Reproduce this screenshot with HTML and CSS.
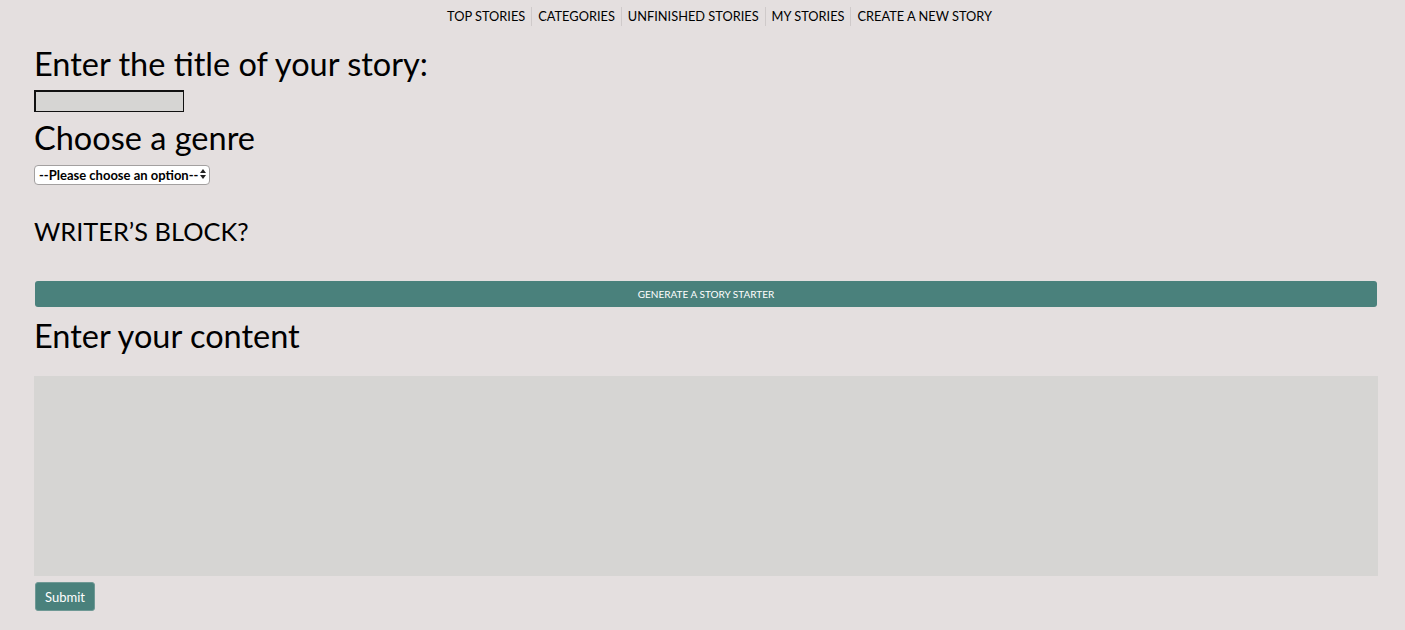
FILE: index.html
```html
<!DOCTYPE html>
<html lang="en">
<head>
<meta charset="utf-8">
<title>Create a new story</title>
<link rel="stylesheet" href="styles.css">
</head>
<body>
<nav class="nav">
  <a class="nav-link" href="#">TOP STORIES</a>
  <a class="nav-link" href="#">CATEGORIES</a>
  <a class="nav-link" href="#">UNFINISHED STORIES</a>
  <a class="nav-link" href="#">MY STORIES</a>
  <a class="nav-link" href="#">CREATE A NEW STORY</a>
</nav>
<main class="page">
  <form class="story-form">
    <h1 class="heading title-heading">Enter the title of your story:</h1>
    <input class="title-input" type="text">
    <h1 class="heading">Choose a genre</h1>
    <div class="select-wrap">
      <select class="genre-select">
        <option>--Please choose an option--</option>
      </select>
      <span class="select-arrows"><span class="arr-up"></span><span class="arr-down"></span></span>
    </div>
    <h2 class="subheading">WRITER’S BLOCK?</h2>
    <button type="button" class="generate-btn">GENERATE A STORY STARTER</button>
    <h1 class="heading content-heading">Enter your content</h1>
    <textarea class="content-area"></textarea>
    <button type="submit" class="submit-btn">Submit</button>
  </form>
</main>
</body>
</html>
```
FILE: styles.css
```css
html, body {
  margin: 0;
  padding: 0;
}
body {
  background: #e4dfdf;
  font-family: "Lato", "Noto Sans", sans-serif;
  color: #000;
  width: 1405px;
  height: 630px;
  overflow: hidden;
}
.nav {
  display: flex;
  justify-content: center;
  align-items: center;
  padding: 7px 0 0 34px;
  height: 19px;
}
.nav-link {
  color: #000;
  text-decoration: none;
  font-size: 12.8px;
  line-height: 19px;
  padding: 0 6px;
  border-left: 1px solid #cfcaca;
}
.nav-link:first-child {
  border-left: none;
}
.page {
  padding: 0 27px 0 34px;
}
.story-form {
  display: flex;
  flex-direction: column;
  align-items: flex-start;
}
.heading {
  font-weight: 400;
  font-size: 32.5px;
  line-height: 52px;
  margin: 0;
}
.title-heading {
  margin-top: 12px;
}
.title-input {
  box-sizing: border-box;
  width: 150px;
  height: 22px;
  margin: 0;
  padding: 0;
  background: #d6d5d3;
  border-style: solid;
  border-color: #111;
  border-width: 2px 1px 1px 2px;
}
.select-wrap {
  position: relative;
  width: 176px;
  height: 20px;
}
.genre-select {
  appearance: none;
  -webkit-appearance: none;
  box-sizing: border-box;
  width: 176px;
  height: 20px;
  margin: 0;
  padding: 0 0 0 4px;
  background: #fff;
  border: 1px solid #a3a0a0;
  border-radius: 4px;
  font-family: inherit;
  font-weight: 700;
  font-size: 13px;
  color: #000;
}
.select-arrows {
  position: absolute;
  right: 4px;
  top: 5px;
  display: flex;
  flex-direction: column;
  gap: 2px;
}
.arr-up, .arr-down {
  width: 0;
  height: 0;
  border-left: 3px solid transparent;
  border-right: 3px solid transparent;
}
.arr-up { border-bottom: 4px solid #222; }
.arr-down { border-top: 4px solid #222; }
.subheading {
  font-weight: 400;
  font-size: 25.4px;
  line-height: 30px;
  margin: 32px 0 0;
}
.generate-btn {
  align-self: stretch;
  margin: 35px 1px 0;
  height: 26px;
  background: #4a817c;
  color: #fff;
  border: none;
  border-radius: 3px;
  font-family: inherit;
  font-size: 10px;
  cursor: pointer;
}
.content-heading {
  margin-top: 3px;
}
.content-area {
  align-self: stretch;
  box-sizing: border-box;
  height: 200px;
  margin: 14px 0 0;
  background: #d6d5d3;
  border: none;
  resize: none;
  padding: 2px;
}
.submit-btn {
  margin: 6px 0 0 1px;
  width: 60px;
  height: 29px;
  background: #4a817c;
  color: #fff;
  border: 1px solid #6f9995;
  border-radius: 3px;
  font-family: inherit;
  font-size: 13px;
  cursor: pointer;
}
```
